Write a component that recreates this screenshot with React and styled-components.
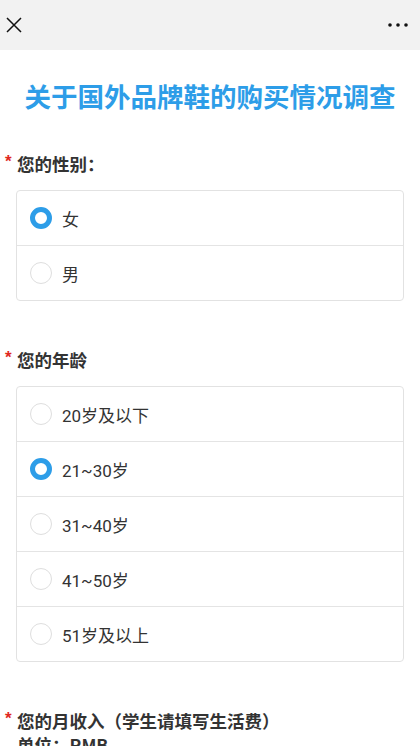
import React from "react";
import styled, { createGlobalStyle } from "styled-components";

const Global = createGlobalStyle`
  html, body { margin: 0; padding: 0; background: #fff; }
  body { font-family: Roboto, "Noto Sans CJK SC", sans-serif; color: #333; }
  * { box-sizing: border-box; }
`;

const Page = styled.div`
  width: 420px;
  height: 746px;
  overflow: hidden;
  background: #fff;
`;

const TopBar = styled.div`
  height: 50px;
  background: #f2f2f2;
  display: flex;
  align-items: center;
  justify-content: space-between;
  padding: 0 12px 0 6px;
`;

const IconBtn = styled.div`
  display: flex;
  align-items: center;
  justify-content: center;
  height: 50px;
`;

const Title = styled.h1`
  margin: 0;
  padding-top: 26px;
  line-height: 40px;
  font-size: 26.5px;
  font-weight: 700;
  color: #2d9de8;
  text-align: center;
  letter-spacing: 0;
  font-family: "Noto Sans CJK SC", sans-serif;
`;

const Questions = styled.div`
  display: flex;
  flex-direction: column;
  gap: 47px;
  padding-top: 36px;
`;

const Question = styled.section`
  display: flex;
  flex-direction: column;
  gap: 14px;
`;

const Label = styled.div`
  display: flex;
  padding-left: 5px;
  font-size: 17.5px;
  line-height: 24px;
  font-weight: 700;
  color: #333;
  font-family: "Noto Sans CJK SC", sans-serif;
`;

const Star = styled.span`
  width: 12px;
  flex: none;
  color: #e0281e;
  font-size: 17px;
  line-height: 20px;
  font-family: "Liberation Sans", sans-serif;
  font-weight: 700;
`;

const Card = styled.div`
  margin: 0 16px;
  border: 1px solid #e2e2e2;
  border-radius: 4px;
  display: flex;
  flex-direction: column;
  overflow: hidden;
`;

const Option = styled.div`
  height: ${(p) => (p.$first ? 54 : 55)}px;
  display: flex;
  align-items: center;
  gap: 10px;
  padding-left: 13px;
  border-top: ${(p) => (p.$first ? "none" : "1px solid #e4e4e4")};
  font-size: 17px;
  color: #333;
  font-family: Roboto, "Noto Sans CJK SC", sans-serif;
`;

const Radio = styled.span`
  width: 22px;
  height: 22px;
  border-radius: 50%;
  flex: none;
  background: #fff;
  border: ${(p) => (p.$checked ? "5.5px solid #2d9de8" : "1px solid #dedede")};
`;

const q1 = ["女", "男"];
const q2 = ["20岁及以下", "21~30岁", "31~40岁", "41~50岁", "51岁及以上"];

function Options({ items, checked }) {
  return (
    <Card>
      {items.map((t, i) => (
        <Option key={t} $first={i === 0}>
          <Radio $checked={i === checked} />
          <span>{t}</span>
        </Option>
      ))}
    </Card>
  );
}

export default function App() {
  return (
    <Page>
      <Global />
      <TopBar>
        <IconBtn>
          <svg width="16" height="16" viewBox="0 0 16 16">
            <path d="M1 1 L15 15 M15 1 L1 15" stroke="#111" strokeWidth="1.5" fill="none" />
          </svg>
        </IconBtn>
        <IconBtn>
          <svg width="20" height="6" viewBox="0 0 20 6">
            <circle cx="2" cy="3" r="1.8" fill="#111" />
            <circle cx="10" cy="3" r="1.8" fill="#111" />
            <circle cx="18" cy="3" r="1.8" fill="#111" />
          </svg>
        </IconBtn>
      </TopBar>
      <Title>关于国外品牌鞋的购买情况调查</Title>
      <Questions>
        <Question>
          <Label>
            <Star>*</Star>
            <span>您的性别：</span>
          </Label>
          <Options items={q1} checked={0} />
        </Question>
        <Question>
          <Label>
            <Star>*</Star>
            <span>您的年龄</span>
          </Label>
          <Options items={q2} checked={1} />
        </Question>
        <Question>
          <Label>
            <Star>*</Star>
            <span>
              您的月收入（学生请填写生活费）
              <br />
              单位：RMB
            </span>
          </Label>
        </Question>
      </Questions>
    </Page>
  );
}
